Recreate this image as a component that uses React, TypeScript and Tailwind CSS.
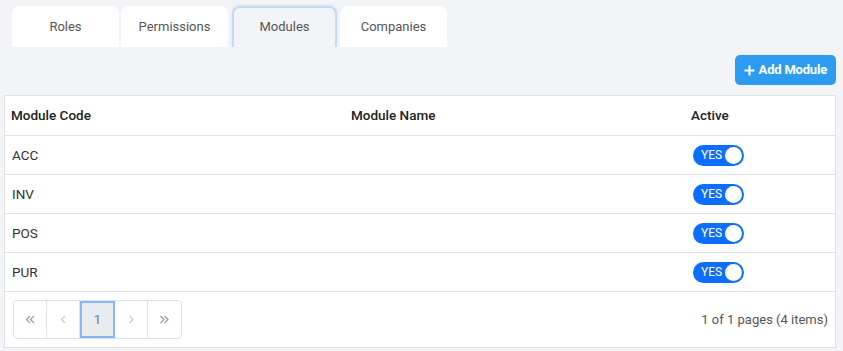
import React from "react";

const tabs = ["Roles", "Permissions", "Modules", "Companies"];

const modules = [
  { code: "ACC", name: "", active: true },
  { code: "INV", name: "", active: true },
  { code: "POS", name: "", active: true },
  { code: "PUR", name: "", active: true },
];

function Toggle({ on }: { on: boolean }) {
  return (
    <div className="flex h-[21px] w-[51px] items-center justify-between rounded-full bg-[#0d6efd] pl-[8px] pr-[2px]">
      <span className="text-[12px] leading-none text-white">{on ? "YES" : "NO"}</span>
      <span className="h-[17px] w-[17px] rounded-full bg-white" />
    </div>
  );
}

function Chevron({ dir, double, color }: { dir: "l" | "r"; double?: boolean; color: string }) {
  const one = dir === "l" ? "M5 1 L1.5 4.5 L5 8" : "M1.5 1 L5 4.5 L1.5 8";
  const two = dir === "l" ? "M9 1 L5.5 4.5 L9 8" : "M5.5 1 L9 4.5 L5.5 8";
  return (
    <svg width={double ? 11 : 7} height="9" viewBox={double ? "0 0 11 9" : "0 0 7 9"} fill="none">
      <path d={one} stroke={color} strokeWidth="1.3" />
      {double && <path d={two} stroke={color} strokeWidth="1.3" />}
    </svg>
  );
}

export default function App() {
  return (
    <div className="h-[351px] w-[843px] bg-[#f3f4f8] font-['Roboto',sans-serif] text-[14px] text-[#333]">
      <div className="flex gap-[2px] px-[12px] pt-[6px]">
        {tabs.map((t) =>
          t === "Modules" ? (
            <div
              key={t}
              className="ml-[2px] mr-[1px] flex h-[41px] w-[105px] items-center justify-center rounded-t-[8px] border-x-2 border-t-2 border-[#bfdcfb] bg-[#f3f4f8] pb-[2px] text-[13px] text-[#555] shadow-[0_-1px_3px_rgba(0,0,0,0.08)]"
            >
              {t}
            </div>
          ) : (
            <div
              key={t}
              className="flex h-[41px] w-[107px] items-center justify-center rounded-t-[8px] bg-white text-[13px] text-[#555]"
            >
              {t}
            </div>
          )
        )}
      </div>

      <div className="flex justify-end px-[7px] pt-[8px] pb-[10px]">
        <button className="flex h-[30px] items-center gap-[4px] rounded-[5px] bg-[#2d9cf0] px-[9px] text-[13px] font-bold tracking-[-0.2px] text-white">
          <svg width="11" height="11" viewBox="0 0 11 11">
            <path d="M5.5 0.5v10M0.5 5.5h10" stroke="white" strokeWidth="2" />
          </svg>
          Add Module
        </button>
      </div>

      <div className="mx-[4px] mr-[7px] border border-[#dee2e6] bg-white">
        <div className="grid h-[40px] grid-cols-[340px_340px_1fr] items-center border-b border-[#dee2e6] px-[6px] text-[13.5px] font-medium text-[#222]">
          <div>Module Code</div>
          <div>Module Name</div>
          <div>Active</div>
        </div>
        {modules.map((m) => (
          <div
            key={m.code}
            className="grid h-[39px] grid-cols-[340px_340px_1fr] items-center border-b border-[#dee2e6] px-[7px] text-[13.5px] text-[#333]"
          >
            <div>{m.code}</div>
            <div>{m.name}</div>
            <div className="pl-[1px]">
              <Toggle on={m.active} />
            </div>
          </div>
        ))}
        <div className="flex h-[55px] items-center justify-between pl-[8px] pr-[7px]">
          <div className="flex h-[39px] overflow-hidden rounded-[4px] border border-[#dee2e6]">
            <div className="flex w-[33px] items-center justify-center border-r border-[#dee2e6]">
              <Chevron dir="l" double color="#8ea0b8" />
            </div>
            <div className="flex w-[33px] items-center justify-center border-r border-[#dee2e6]">
              <Chevron dir="l" color="#c3ccd8" />
            </div>
            <div className="flex w-[35px] items-center justify-center border-2 border-[#86b7fe] bg-[#e9ecef] text-[13px] text-[#6a6fd8]">1</div>
            <div className="flex w-[33px] items-center justify-center border-r border-[#dee2e6]">
              <Chevron dir="r" color="#c3ccd8" />
            </div>
            <div className="flex w-[33px] items-center justify-center">
              <Chevron dir="r" double color="#8ea0b8" />
            </div>
          </div>
          <div className="text-[13px] text-[#555]">1 of 1 pages (4 items)</div>
        </div>
      </div>
    </div>
  );
}
